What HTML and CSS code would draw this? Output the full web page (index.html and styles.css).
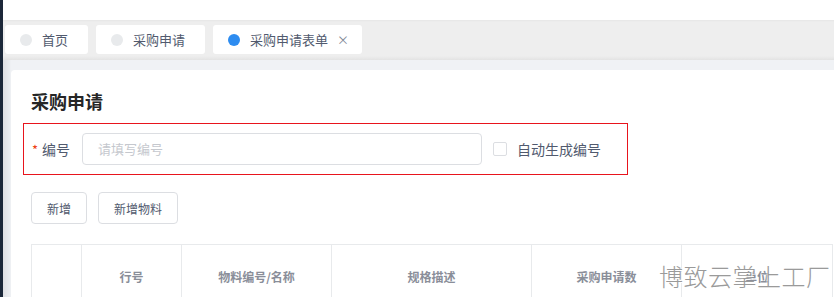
FILE: index.html
```html
<!DOCTYPE html>
<html lang="zh-CN">
<head>
<meta charset="utf-8">
<link rel="stylesheet" href="styles.css">
</head>
<body>
<div class="app">
  <div class="side-edge"></div>
  <div class="main">
    <div class="topbar"></div>
    <div class="tabbar">
      <div class="tab"><span class="dot"></span><span class="tab-text">首页</span></div>
      <div class="tab"><span class="dot"></span><span class="tab-text">采购申请</span></div>
      <div class="tab"><span class="dot active"></span><span class="tab-text">采购申请表单</span><span class="close">×</span></div>
    </div>
    <div class="content">
      <div class="card">
        <h1 class="title">采购申请</h1>
        <div class="form-row">
          <label class="form-label"><span class="req">*</span>编号</label>
          <div class="input">请填写编号</div>
          <span class="checkbox"></span>
          <span class="check-label">自动生成编号</span>
        </div>
        <div class="btns">
          <button class="btn">新增</button>
          <button class="btn">新增物料</button>
        </div>
        <table class="grid">
          <colgroup>
            <col class="c1"><col class="c2"><col class="c3"><col class="c4"><col class="c5"><col class="c6">
          </colgroup>
          <thead>
            <tr><th></th><th>行号</th><th>物料编号/名称</th><th>规格描述</th><th>采购申请数</th><th>单位</th></tr>
          </thead>
        </table>
      </div>
    </div>
  </div>
  <div class="watermark">博致云掌上工厂</div>
</div>
</body>
</html>
```

FILE: styles.css
```css
* { box-sizing: border-box; }
html, body { margin: 0; padding: 0; }
body {
  font-family: "Noto Sans CJK SC", "Noto Sans", sans-serif;
  background: #f0f2f5;
  width: 834px;
  height: 297px;
  overflow: hidden;
}
.app {
  position: relative;
  display: flex;
  height: 297px;
  overflow: hidden;
}
.side-edge {
  width: 3px;
  flex: none;
  background: #1c2839;
}
.main {
  flex: 1;
  min-width: 0;
  background: linear-gradient(to right, #dfe0e3 0, #eceef1 7px, #f0f2f5 8px);
}
.topbar {
  height: 20px;
  background: #fff;
}
.tabbar {
  height: 40px;
  background: linear-gradient(to bottom, #e6e6e6 0, #eeeeee 2px, #eeeeee 36px, #e3e3e3 40px);
  display: flex;
  align-items: flex-start;
  gap: 8px;
  padding: 5px 0 0 2px;
}
.tab {
  height: 29px;
  background: #fff;
  border-radius: 3px;
  display: flex;
  align-items: center;
  padding: 0 20px 0 15px;
  font-size: 13px;
  color: #515a6e;
}
.tab .dot {
  width: 12px;
  height: 12px;
  border-radius: 50%;
  background: #e8eaec;
  margin-right: 10px;
}
.tab .dot.active { background: #2d8cf0; }
.tab-text { line-height: 29px; }
.close {
  margin-left: 9px;
  margin-right: -7px;
  font-size: 12px;
  color: #808695;
  line-height: 29px;
}
.content {
  padding: 10px 0 0 8px;
}
.card {
  background: #fff;
  border-radius: 4px 0 0 0;
  padding: 19px 0 0 20px;
  width: 860px;
  height: 240px;
}
.title {
  margin: 0;
  font-size: 18px;
  line-height: 24px;
  font-weight: 700;
  color: #262626;
}
.form-row {
  margin: 10px 0 0 -8px;
  width: 605px;
  height: 52px;
  border: 1px solid #e8141d;
  display: flex;
  align-items: center;
  padding: 0 8px;
}
.form-label {
  width: 50px;
  font-size: 14px;
  color: #515a6e;
}
.req {
  color: #ed4014;
  margin-right: 4px;
  font-size: 13px;
}
.input {
  width: 400px;
  height: 32px;
  border: 1px solid #dcdee2;
  border-radius: 4px;
  padding-left: 15px;
  font-size: 13px;
  line-height: 30px;
  color: #c5c8ce;
}
.checkbox {
  width: 14px;
  height: 14px;
  border: 1px solid #dcdee2;
  border-radius: 2px;
  margin-left: 11px;
}
.check-label {
  margin-left: 10px;
  font-size: 14px;
  color: #515a6e;
}
.btns {
  margin-top: 17px;
  display: flex;
  gap: 11px;
}
.btn {
  height: 32px;
  padding: 0 15px;
  border: 1px solid #dcdee2;
  border-radius: 4px;
  background: #fff;
  font-family: inherit;
  font-size: 12px;
  color: #515a6e;
}
.grid {
  margin-top: 20px;
  border-collapse: collapse;
  table-layout: fixed;
  width: 801px;
}
.grid .c1 { width: 50px; }
.grid .c2 { width: 100px; }
.grid .c3 { width: 150px; }
.grid .c4 { width: 200px; }
.grid .c5 { width: 150px; }
.grid .c6 { width: 151px; }
.grid th {
  height: 64px;
  border: 1px solid #e8eaec;
  border-bottom: none;
  font-size: 12px;
  font-weight: 700;
  color: #8a8e99;
  text-align: center;
  vertical-align: middle;
}
.watermark {
  position: absolute;
  left: 659px;
  top: 259px;
  font-size: 24px;
  line-height: 34px;
  font-weight: 300;
  color: #9a9a9a;
  letter-spacing: 0.5px;
  text-shadow: 1px 1px 0 #fff, -1px 0 0 rgba(255,255,255,0.6);
  white-space: nowrap;
}
```
